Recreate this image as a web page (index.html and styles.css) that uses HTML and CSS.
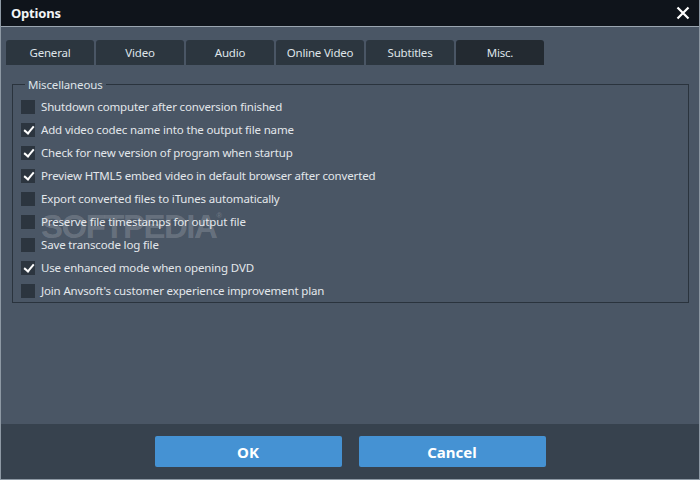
FILE: index.html
```html
<!DOCTYPE html>
<html lang="en">
<head>
    <meta charset="UTF-8">
    <title>Options</title>
    <link rel="stylesheet" href="styles.css">
</head>
<body>
    <div class="window">
        <div class="titlebar">
            <span class="title">Options</span>
            <svg class="close" width="14" height="14" viewBox="0 0 14 14">
                <path d="M1.5 1.5 L12.5 12.5 M12.5 1.5 L1.5 12.5" stroke="#fff" stroke-width="2.2"/>
            </svg>
        </div>

        <div class="content">
            <div class="tabs">
                <div class="tab">General</div>
                <div class="tab">Video</div>
                <div class="tab">Audio</div>
                <div class="tab">Online Video</div>
                <div class="tab">Subtitles</div>
                <div class="tab active">Misc.</div>
            </div>

            <fieldset class="group">
                <legend>Miscellaneous</legend>
                <label class="option"><span class="box"></span>Shutdown computer after conversion finished</label>
                <label class="option"><span class="box checked"></span>Add video codec name into the output file name</label>
                <label class="option"><span class="box checked"></span>Check for new version of program when startup</label>
                <label class="option"><span class="box checked"></span>Preview HTML5 embed video in default browser after converted</label>
                <label class="option"><span class="box"></span>Export converted files to iTunes automatically</label>
                <label class="option"><span class="box"></span>Preserve file timestamps for output file</label>
                <label class="option"><span class="box"></span>Save transcode log file</label>
                <label class="option"><span class="box checked"></span>Use enhanced mode when opening DVD</label>
                <label class="option"><span class="box"></span>Join Anvsoft's customer experience improvement plan</label>
            </fieldset>

            <div class="watermark">SOFTPEDIA<sup>®</sup></div>
        </div>

        <div class="footer">
            <button class="btn">OK</button>
            <button class="btn">Cancel</button>
        </div>
    </div>
</body>
</html>
```

FILE: styles.css
```css
body {
    margin: 0;
    font-family: "Noto Sans", "Open Sans", sans-serif;
    background: #4a5665;
}

.window {
    width: 700px;
    height: 480px;
    box-sizing: border-box;
    display: flex;
    flex-direction: column;
    border-left: 1px solid #8e99a4;
    border-right: 1px solid #8e99a4;
    border-bottom: 1px solid #8e99a4;
    background: #4a5665;
}

.titlebar {
    height: 26px;
    flex: none;
    display: flex;
    align-items: center;
    justify-content: space-between;
    padding: 0 9px 0 10px;
    background: #0f141b;
    border-bottom: 1px solid #9aa5b0;
}

.title {
    color: #f2f4f6;
    font-weight: bold;
    font-size: 13px;
    letter-spacing: -0.2px;
}

.content {
    flex: 1;
    position: relative;
    padding: 13px 10px 0 5px;
}

.tabs {
    display: flex;
    gap: 2px;
}

.tab {
    width: 88px;
    height: 25px;
    line-height: 25px;
    text-align: center;
    font-size: 11.5px;
    letter-spacing: -0.2px;
    color: #dfe4e9;
    background: #2c363f;
    border-radius: 3px 3px 0 0;
}

.tab.active {
    background: #232a31;
}

.group {
    margin: 12px 0 0 6px;
    padding: 3px 0 0 8px;
    border: 1px solid #2a333d;
    min-width: 0;
}

.group legend {
    margin-left: 4px;
    padding: 0 3px;
    font-size: 11.5px;
    letter-spacing: -0.15px;
    color: #dfe4e9;
}

.option {
    display: flex;
    align-items: center;
    height: 23px;
    font-size: 11.5px;
    letter-spacing: -0.15px;
    color: #e3e7eb;
}

.box {
    width: 14px;
    height: 14px;
    margin-right: 6px;
    background: #2c353f;
    position: relative;
    flex: none;
}

.box.checked::after {
    content: "";
    position: absolute;
    left: 5px;
    top: 1px;
    width: 4px;
    height: 8px;
    border-right: 2.5px solid #fff;
    border-bottom: 2.5px solid #fff;
    transform: rotate(40deg);
}

.watermark {
    position: absolute;
    left: 40px;
    top: 172px;
    line-height: 33px;
    font-family: "Liberation Sans", sans-serif;
    font-weight: bold;
    font-size: 33px;
    letter-spacing: -1.5px;
    color: rgba(255, 255, 255, 0.18);
    pointer-events: none;
}

.watermark sup {
    font-size: 8px;
    vertical-align: 20px;
}

.footer {
    height: 55px;
    flex: none;
    display: flex;
    justify-content: center;
    align-items: center;
    gap: 17px;
    background: #37424e;
}

.btn {
    width: 187px;
    height: 31px;
    border: none;
    border-radius: 2px;
    background: #4592d3;
    color: #fff;
    font-family: "Noto Sans", sans-serif;
    font-weight: bold;
    font-size: 15px;
}
```
